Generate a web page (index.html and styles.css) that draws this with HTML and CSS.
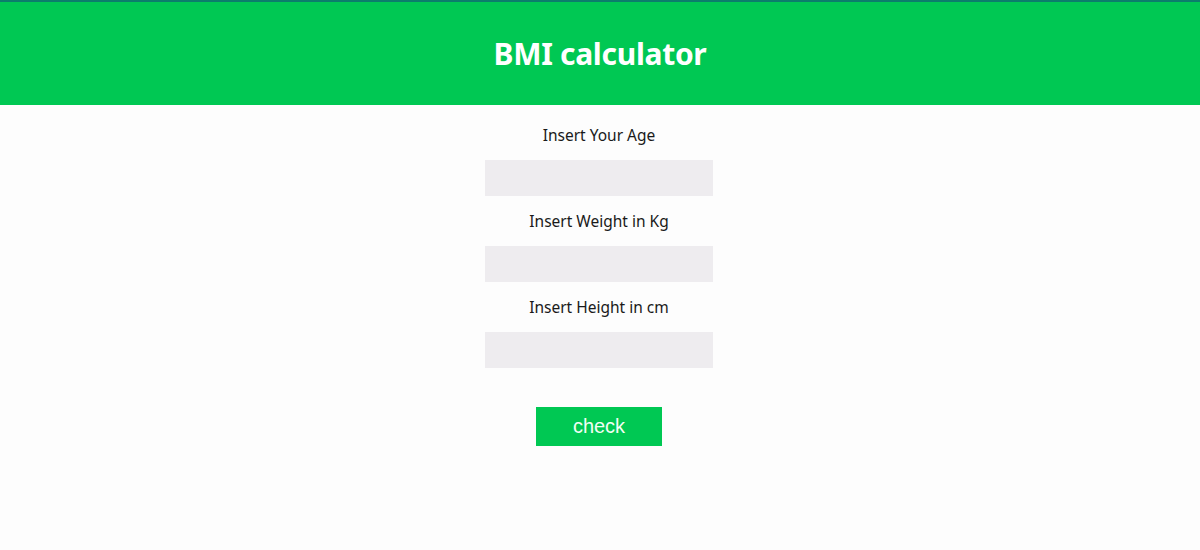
FILE: index.html
```html
<!DOCTYPE html>
<html lang="en">
<head>
<meta charset="utf-8">
<title>BMI calculator</title>
<link rel="stylesheet" href="styles.css">
</head>
<body>
<header class="header">
  <h1 class="title">BMI calculator</h1>
</header>
<main class="form">
  <div class="field">
    <label class="label" for="age">Insert Your Age</label>
    <input class="input" id="age" type="text">
  </div>
  <div class="field">
    <label class="label" for="weight">Insert Weight in Kg</label>
    <input class="input" id="weight" type="text">
  </div>
  <div class="field">
    <label class="label" for="height">Insert Height in cm</label>
    <input class="input" id="height" type="text">
  </div>
  <button class="button" type="button">check</button>
</main>
</body>
</html>
```
FILE: styles.css
```css
html, body {
  margin: 0;
  padding: 0;
}
body {
  background: #fdfdfd;
  font-family: "Noto Sans", "Open Sans", sans-serif;
  color: #1a1a1a;
}
.header {
  height: 103px;
  border-top: 2px solid #0c7d6c;
  background: #00c853;
  display: flex;
  align-items: center;
  justify-content: center;
}
.title {
  margin: 0;
  color: #ffffff;
  font-size: 30px;
  font-weight: 700;
  letter-spacing: -0.3px;
  line-height: 1;
}
.form {
  display: flex;
  flex-direction: column;
  align-items: center;
  padding-top: 20px;
  padding-right: 2px;
}
.field {
  display: flex;
  flex-direction: column;
  align-items: center;
  margin-bottom: 15px;
}
.label {
  font-size: 15.5px;
  line-height: 20px;
  margin-bottom: 15px;
}
.input {
  box-sizing: border-box;
  width: 228px;
  height: 36px;
  border: none;
  background: #eeecef;
  margin: 0;
  padding: 0 8px;
}
.button {
  margin-top: 24px;
  width: 126px;
  height: 39px;
  border: none;
  background: #00c853;
  color: #f2fff4;
  font-family: "Liberation Sans", Arial, sans-serif;
  font-size: 20px;
  padding: 0;
}
```
